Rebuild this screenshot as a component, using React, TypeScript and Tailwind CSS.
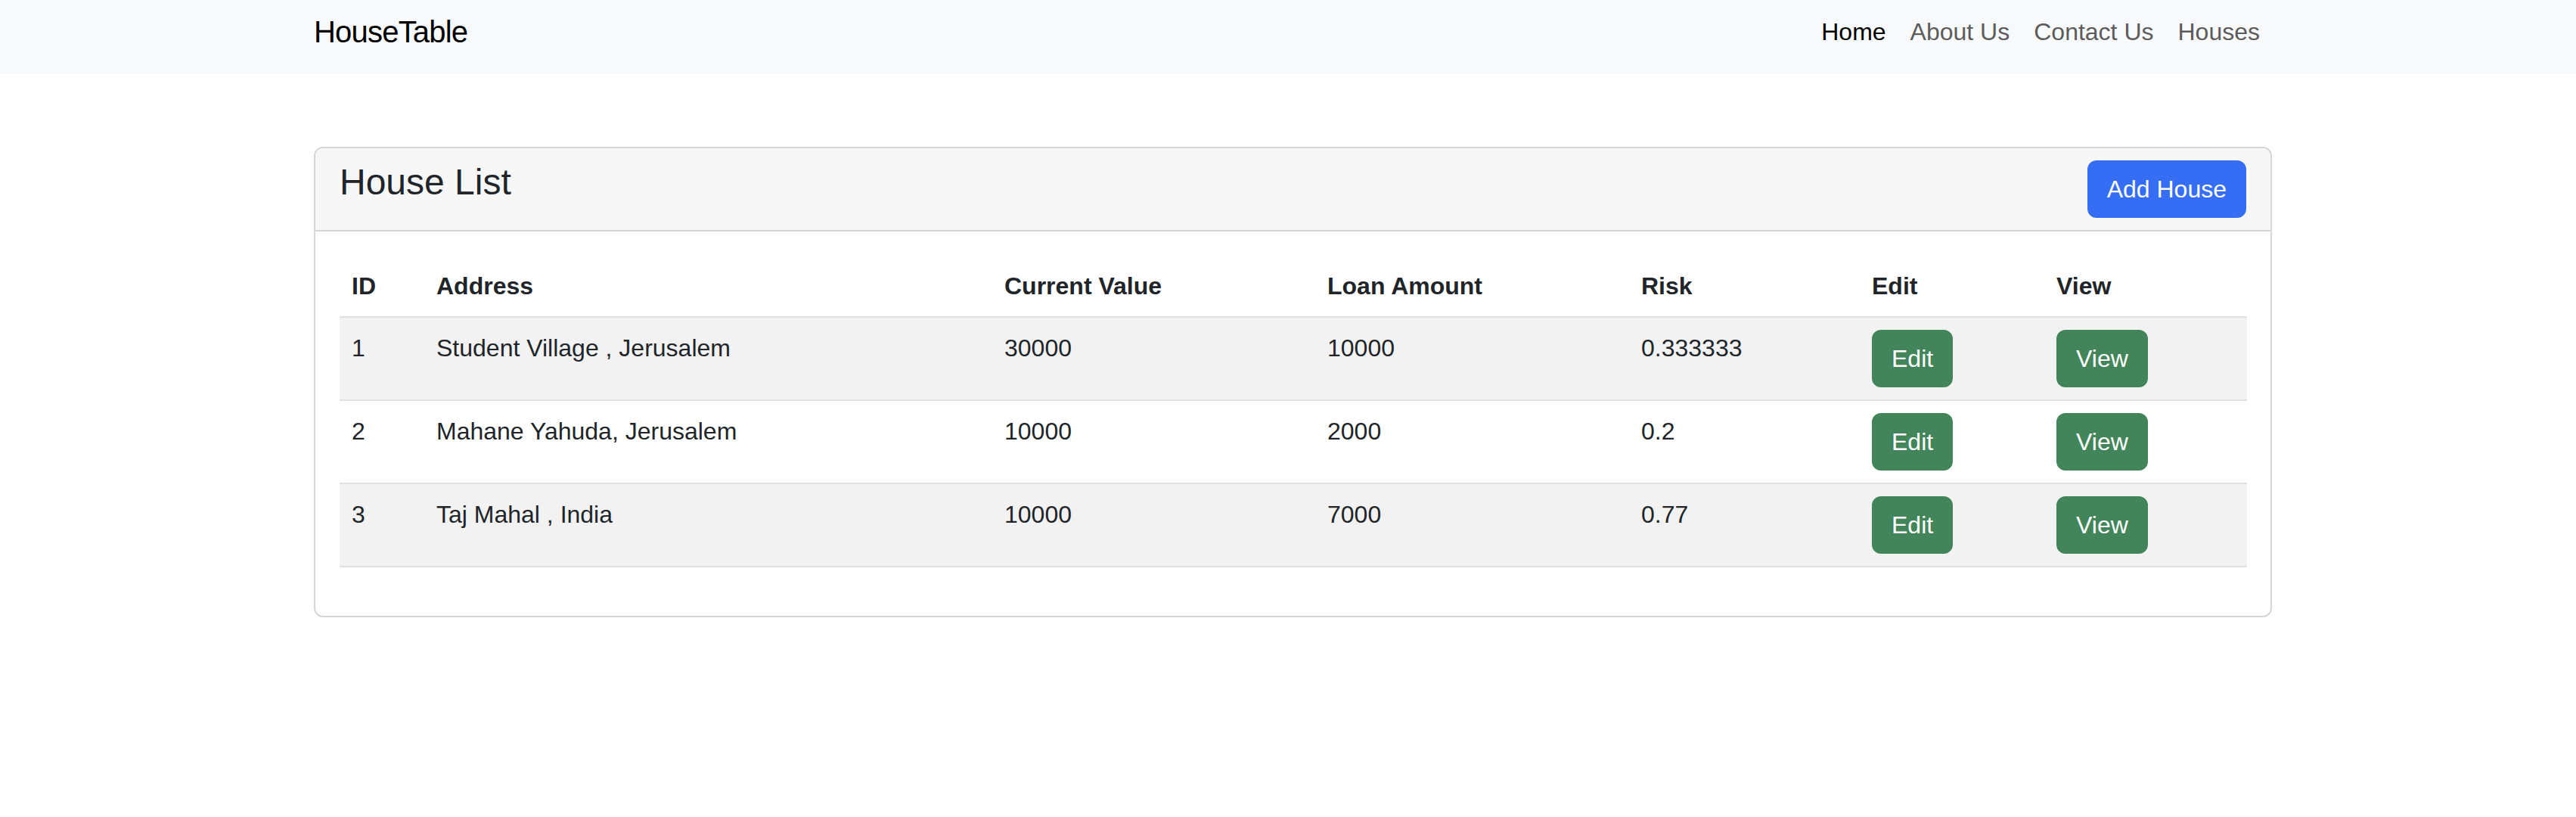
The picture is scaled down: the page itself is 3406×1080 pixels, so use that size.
import React from "react";

interface House {
  id: number;
  address: string;
  currentValue: number;
  loanAmount: number;
  risk: number;
}

const houses: House[] = [
  { id: 1, address: "Student Village , Jerusalem", currentValue: 30000, loanAmount: 10000, risk: 0.333333 },
  { id: 2, address: "Mahane Yahuda, Jerusalem", currentValue: 10000, loanAmount: 2000, risk: 0.2 },
  { id: 3, address: "Taj Mahal , India", currentValue: 10000, loanAmount: 7000, risk: 0.77 },
];

const columns = [
  { label: "ID", width: "w-[112px]" },
  { label: "Address", width: "w-[751px]" },
  { label: "Current Value", width: "w-[427px]" },
  { label: "Loan Amount", width: "w-[415px]" },
  { label: "Risk", width: "w-[305px]" },
  { label: "Edit", width: "w-[244px]" },
  { label: "View", width: "w-[268px]" },
];

const GreenButton: React.FC<{ label: string }> = ({ label }) => (
  <button
    type="button"
    className="h-[76px] px-[24px] border-2 border-[#42855a] bg-[#42855a] text-white text-[32px] leading-[48px] rounded-[12px]"
  >
    {label}
  </button>
);

const App: React.FC = () => {
  return (
    <div className="min-h-[1080px] bg-white text-[#212529] font-['Liberation_Sans',Arial,sans-serif]">
      <nav className="bg-[#f8f9fa] h-[97px] pb-[13px]">
        <div className="w-[2589px] ml-[415px] h-full flex items-center justify-between">
          <a href="#" className="text-[40px] leading-[60px] tracking-[-0.8px] text-black">
            HouseTable
          </a>
          <ul className="flex items-center text-[32px] leading-[48px]">
            <li><a href="#" className="block px-[16px] text-black">Home</a></li>
            <li><a href="#" className="block px-[16px] text-[#5c5c5c]">About Us</a></li>
            <li><a href="#" className="block px-[16px] text-[#5c5c5c]">Contact Us</a></li>
            <li><a href="#" className="block px-[16px] text-[#5c5c5c]">Houses</a></li>
          </ul>
        </div>
      </nav>

      <div className="w-[2589px] ml-[415px] mt-[97px] border-2 border-[#d6d6d6] rounded-[12px] overflow-hidden">
        <div className="bg-[#f7f7f7] border-b-2 border-[#d6d6d6] px-[32px] py-[16px] flex justify-between items-start">
          <h4 className="text-[48px] leading-[57.6px] font-normal">House List</h4>
          <button
            type="button"
            className="h-[76px] px-[24px] border-2 border-[#356ef5] bg-[#356ef5] text-white text-[32px] leading-[48px] rounded-[12px]"
          >
            Add House
          </button>
        </div>

        <div className="p-[32px]">
          <table className="w-full table-fixed border-collapse mb-[32px] text-[32px] leading-[48px]">
            <thead>
              <tr className="border-b-2 border-[#dee2e6]">
                {columns.map((c) => (
                  <th key={c.label} className={`${c.width} p-[16px] text-left font-bold align-top`}>
                    {c.label}
                  </th>
                ))}
              </tr>
            </thead>
            <tbody>
              {houses.map((h, i) => (
                <tr key={h.id} className={`border-b-2 border-[#dee2e6] ${i % 2 === 0 ? "bg-[#f2f2f2]" : "bg-white"}`}>
                  <td className="p-[16px] align-top">{h.id}</td>
                  <td className="p-[16px] align-top">{h.address}</td>
                  <td className="p-[16px] align-top">{h.currentValue}</td>
                  <td className="p-[16px] align-top">{h.loanAmount}</td>
                  <td className="p-[16px] align-top">{h.risk}</td>
                  <td className="p-[16px] align-top"><GreenButton label="Edit" /></td>
                  <td className="p-[16px] align-top"><GreenButton label="View" /></td>
                </tr>
              ))}
            </tbody>
          </table>
        </div>
      </div>
    </div>
  );
};

export default App;
